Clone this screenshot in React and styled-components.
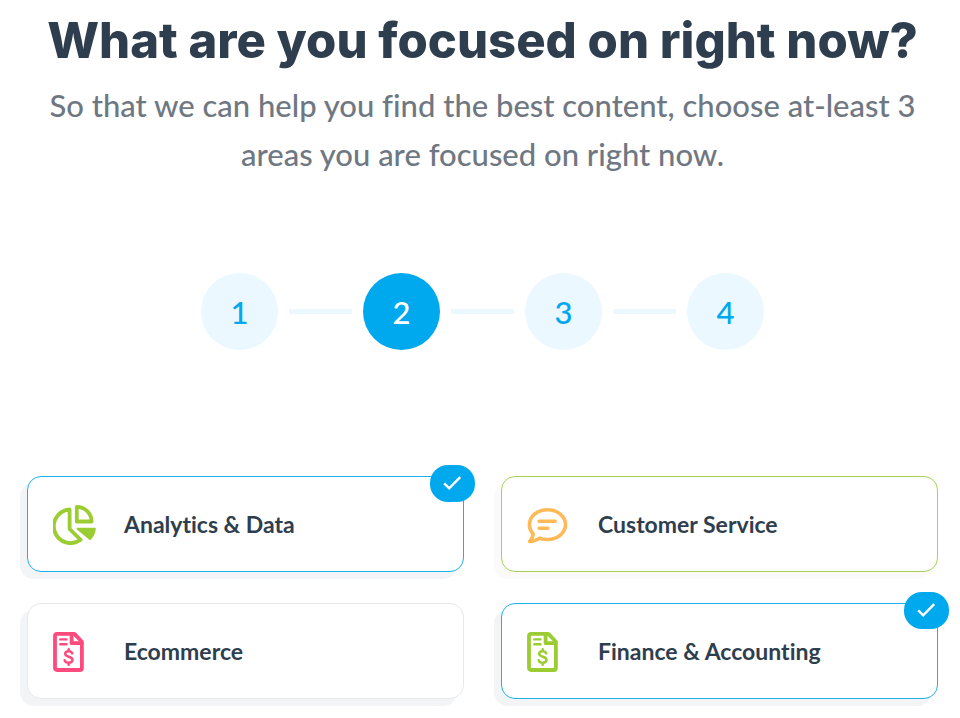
import React, { useState } from 'react';
import styled, { createGlobalStyle } from 'styled-components';

const GlobalStyle = createGlobalStyle`
  * {
    box-sizing: border-box;
  }

  body {
    margin: 0;
    background: #fff;
    color: #2f3e4e;
    font-family: Lato, 'Open Sans', sans-serif;
    font-variant-ligatures: none;
  }
`;

const Page = styled.main`
  padding: 8px 22px 20px 27px;
`;

const Header = styled.header`
  text-align: center;
`;

const Title = styled.h1`
  margin: 0;
  font-family: Inter, Lato, sans-serif;
  font-size: 49px;
  font-weight: 800;
  line-height: 66px;
`;

const Subtitle = styled.p`
  margin: 7px 0 0;
  font-size: 31px;
  font-weight: 500;
  line-height: 49px;
  color: #6f7882;
`;

const Steps = styled.ol`
  display: flex;
  align-items: center;
  justify-content: center;
  gap: 11px;
  margin: 94px 0 126px;
  padding: 0;
  list-style: none;
`;

const Step = styled.li`
  display: flex;
  align-items: center;
  gap: 11px;

  &:not(:last-child)::after {
    content: '';
    width: 63px;
    height: 5px;
    background: #ebf8ff;
  }
`;

const StepNumber = styled.span`
  display: flex;
  align-items: center;
  justify-content: center;
  width: 77px;
  height: 77px;
  border-radius: 50%;
  font-size: 31px;
  font-weight: 500;
  background: ${({ $active }) => ($active ? '#00a8ee' : '#ebf8ff')};
  color: ${({ $active }) => ($active ? '#fff' : '#00a8ee')};
`;

const Grid = styled.div`
  display: grid;
  grid-template-columns: 1fr 1fr;
  gap: 31px 37px;
`;

const Card = styled.label`
  position: relative;
  display: flex;
  align-items: center;
  height: 96px;
  padding: 0 25px;
  border: 1px solid ${({ $border }) => $border};
  border-radius: 14px;
  background: #fff;
  box-shadow: -7px 7px 0 ${({ $soft }) => ($soft ? '#fafafa' : '#f3f4f6')};
  cursor: pointer;
`;

const Checkbox = styled.input`
  position: absolute;
  inset: 0;
  width: 100%;
  height: 100%;
  margin: 0;
  opacity: 0;
  cursor: pointer;
`;

const IconSlot = styled.span`
  display: flex;
  width: 71px;
  padding-top: 2px;

  svg {
    display: block;
    fill: none;
    stroke-linecap: round;
    stroke-linejoin: round;
  }
`;

const CardName = styled.span`
  font-size: 23px;
  font-weight: 700;
  line-height: 32px;
`;

const Badge = styled.span`
  position: absolute;
  top: -12px;
  right: -12px;
  display: flex;
  align-items: center;
  justify-content: center;
  width: 45px;
  height: 37px;
  border-radius: 18px;
  background: #00a8ee;
`;

const PieIcon = () => (
  <svg width="43" height="40" viewBox="0 0 43 40" stroke="#9bcd32" strokeWidth="3.8">
    <path d="M16.6 4.5V24L27.6 34.8A16.8 16.8 0 1 1 16.6 4.5Z" />
    <path d="M23.8 1.9V16.5H38.6A14.8 14.8 0 0 0 23.8 1.9Z" />
    <path d="M24.5 23.8H41.8Q41.3 29.5 37 34Z" fill="#9bcd32" strokeWidth="2" />
  </svg>
);

const ChatIcon = () => (
  <svg width="41" height="37" viewBox="0 0 41 37" stroke="#ffba57" strokeWidth="3.6">
    <path d="M2.6 34.4Q5.6 31.4 6.3 27.2C3.8 24.6 2.4 21.4 2.4 17.8C2.4 9.4 10.2 2.8 20.4 2.8S38.5 9.4 38.5 17.6S30.6 32.5 20.4 32.5Q16.2 32.5 12.6 31.1Q8 34.4 2.6 34.4Z" />
    <path d="M12.2 14.2H28.2M12.2 21.3H20.8" />
  </svg>
);

const InvoiceIcon = ({ color }) => (
  <svg width="31" height="40" viewBox="0 0 31 40" stroke={color} strokeWidth="3.8">
    <path d="M4 1.9H21.4L28.9 9.8V36Q28.9 38 26.9 38H4Q2 38 2 36V3.9Q2 1.9 4 1.9Z" />
    <path d="M18.6 2.5V11.2H28.5" />
    <path d="M7.3 7.4H13.5M7.3 12.3H13.5" strokeWidth="2.4" />
    <path d="M19.2 21.4C18.6 19.8 17.3 19.2 15.7 19.2C13.5 19.2 12.2 20.2 12.2 21.8C12.2 25.6 19.5 23.8 19.5 27.8C19.5 29.6 18 30.7 15.8 30.7C13.7 30.7 12.2 29.8 11.7 28.3M15.7 17.3V19M15.7 31V32.8" strokeWidth="2.5" />
  </svg>
);

const CheckIcon = () => (
  <svg width="19" height="15" viewBox="0 0 19 15" fill="none" stroke="#fff" strokeWidth="2.5">
    <path d="M1.2 7.3L6.2 12.3L17.2 1.2" />
  </svg>
);

const areas = [
  { id: 'analytics', name: 'Analytics & Data', icon: <PieIcon /> },
  { id: 'service', name: 'Customer Service', icon: <ChatIcon />, border: '#a8d250', soft: true },
  { id: 'ecommerce', name: 'Ecommerce', icon: <InvoiceIcon color="#ff4a7d" /> },
  { id: 'finance', name: 'Finance & Accounting', icon: <InvoiceIcon color="#9bcd32" /> },
];

const App = () => {
  const [selected, setSelected] = useState(['analytics', 'finance']);

  const toggle = (id) => {
    setSelected(selected.includes(id) ? selected.filter((item) => item !== id) : [...selected, id]);
  };

  return (
    <>
      <GlobalStyle />
      <Page>
        <Header>
          <Title>What are you focused on right now?</Title>
          <Subtitle>
            So that we can help you find the best content, choose at-least 3 areas you are focused on right now.
          </Subtitle>
        </Header>
        <Steps>
          {[1, 2, 3, 4].map((step) => (
            <Step key={step} aria-current={step === 2 ? 'step' : undefined}>
              <StepNumber $active={step === 2}>{step}</StepNumber>
            </Step>
          ))}
        </Steps>
        <Grid>
          {areas.map(({ id, name, icon, border, soft }) => {
            const checked = selected.includes(id);
            return (
              <Card key={id} htmlFor={id} $border={checked ? '#1cb1ee' : border || '#e7e8ea'} $soft={soft}>
                <Checkbox type="checkbox" id={id} checked={checked} onChange={() => toggle(id)} />
                <IconSlot>{icon}</IconSlot>
                <CardName>{name}</CardName>
                {checked && (
                  <Badge>
                    <CheckIcon />
                  </Badge>
                )}
              </Card>
            );
          })}
        </Grid>
      </Page>
    </>
  );
};

export default App;
